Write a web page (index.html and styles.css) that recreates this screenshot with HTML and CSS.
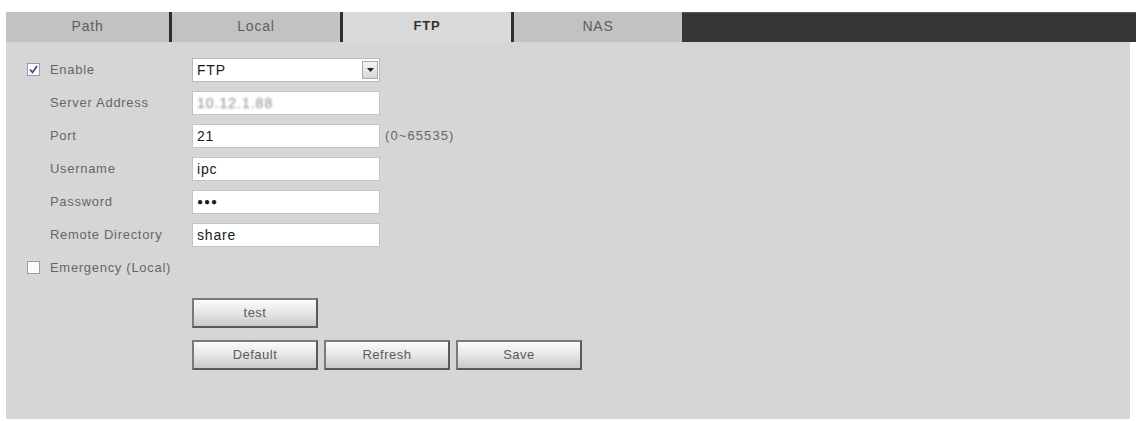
FILE: index.html
```html
<!DOCTYPE html>
<html>
<head>
<meta charset="utf-8">
<link rel="stylesheet" href="styles.css">
</head>
<body>
<div class="panel">
  <div class="tabs">
    <div class="tab">Path</div>
    <div class="sep"></div>
    <div class="tab">Local</div>
    <div class="sep"></div>
    <div class="tab active">FTP</div>
    <div class="sep"></div>
    <div class="tab">NAS</div>
    <div class="rest"></div>
  </div>
  <div class="form">
    <div class="row">
      <div class="lab">
        <span class="cb"><svg width="9" height="9" viewBox="0 0 9 9"><path d="M1 4.5 L3.5 7.5 L8 1" fill="none" stroke="#3b3b8c" stroke-width="1.6"/></svg></span>
        <span>Enable</span>
      </div>
      <div class="select"><span class="val">FTP</span><span class="dd"><svg width="7" height="4" viewBox="0 0 7 4"><path d="M0 0 H7 L3.5 4 Z" fill="#222"/></svg></span></div>
    </div>
    <div class="row">
      <div class="lab ind">Server Address</div>
      <div class="input"><span class="blur">10.12.1.88</span></div>
    </div>
    <div class="row">
      <div class="lab ind">Port</div>
      <div class="input">21</div>
      <div class="hint">(0~65535)</div>
    </div>
    <div class="row">
      <div class="lab ind">Username</div>
      <div class="input">ipc</div>
    </div>
    <div class="row">
      <div class="lab ind">Password</div>
      <div class="input pw">&#9679;&#9679;&#9679;</div>
    </div>
    <div class="row">
      <div class="lab ind">Remote Directory</div>
      <div class="input">share</div>
    </div>
    <div class="row">
      <div class="lab">
        <span class="cb"></span>
        <span>Emergency (Local)</span>
      </div>
    </div>
    <div class="btns first">
      <div class="btn">test</div>
    </div>
    <div class="btns">
      <div class="btn">Default</div>
      <div class="btn">Refresh</div>
      <div class="btn">Save</div>
    </div>
  </div>
</div>
</body>
</html>
```

FILE: styles.css
```css
html, body {
  margin: 0;
  padding: 0;
  background: #ffffff;
}
body {
  font-family: "Liberation Sans", Arial, sans-serif;
  padding: 12px 0 0 6px;
}
.panel {
  width: 1124px;
  height: 407px;
  background: #d6d6d6;
}
.tabs {
  display: flex;
  width: 1130px;
  height: 30px;
}
.tab {
  width: 163px;
  height: 30px;
  line-height: 28px;
  text-align: center;
  background: #c2c2c2;
  color: #5e5e5e;
  font-size: 14px;
  letter-spacing: 0.8px;
}
.tab.active {
  background: #d9d9d9;
  color: #333333;
  font-weight: bold;
  font-size: 13px;
}
.sep {
  width: 3px;
  height: 30px;
  background: #2e2e2e;
}
.tabs .tab + .sep + .tab {
  width: 168px;
}
.rest {
  flex: 1;
  background: #363636;
  border-top: 1px solid #555;
  box-sizing: border-box;
}
.form {
  padding: 11px 0 0 21px;
}
.row {
  display: flex;
  align-items: center;
  height: 33px;
}
.lab {
  width: 165px;
  display: flex;
  align-items: center;
  gap: 10px;
  font-size: 13px;
  letter-spacing: 0.7px;
  color: #666666;
}
.lab.ind {
  padding-left: 23px;
  box-sizing: border-box;
}
.cb {
  width: 11px;
  height: 11px;
  background: #fafafa;
  border: 1px solid #9a9aa8;
  display: flex;
  align-items: center;
  justify-content: center;
}
.select, .input {
  width: 188px;
  height: 24px;
  box-sizing: border-box;
  background: #ffffff;
  border: 1px solid #c4c4c4;
  font-size: 14px;
  letter-spacing: 0.8px;
  color: #1a1a1a;
  display: flex;
  align-items: center;
  padding-left: 4px;
}
.select {
  padding-right: 1px;
  border-color: #b8b8b8;
}
.val {
  flex: 1;
}
.dd {
  width: 16px;
  height: 18px;
  background: linear-gradient(#f4f4f4, #d8d8d8);
  border: 1px solid #a8a8a8;
  box-sizing: border-box;
  display: flex;
  align-items: center;
  justify-content: center;
}
.blur {
  color: #8a8a8a;
  filter: blur(1.2px);
  letter-spacing: 1px;
}
.pw {
  font-size: 10px;
  letter-spacing: 1px;
}
.hint {
  margin-left: 5px;
  font-size: 13px;
  letter-spacing: 1.1px;
  color: #666666;
}
.btns {
  display: flex;
  gap: 6px;
  padding-left: 165px;
  margin-top: 12px;
}
.btns.first {
  margin-top: 14px;
}
.btn {
  width: 126px;
  height: 30px;
  box-sizing: border-box;
  border: 2px solid #5a5a5a;
  border-top-color: #7a7a7a;
  border-left-color: #7a7a7a;
  background: linear-gradient(#fbfbfb, #e6e6e6 50%, #c9c9c9);
  font-size: 13px;
  letter-spacing: 0.5px;
  color: #5a5a5a;
  text-align: center;
  line-height: 26px;
}
```
